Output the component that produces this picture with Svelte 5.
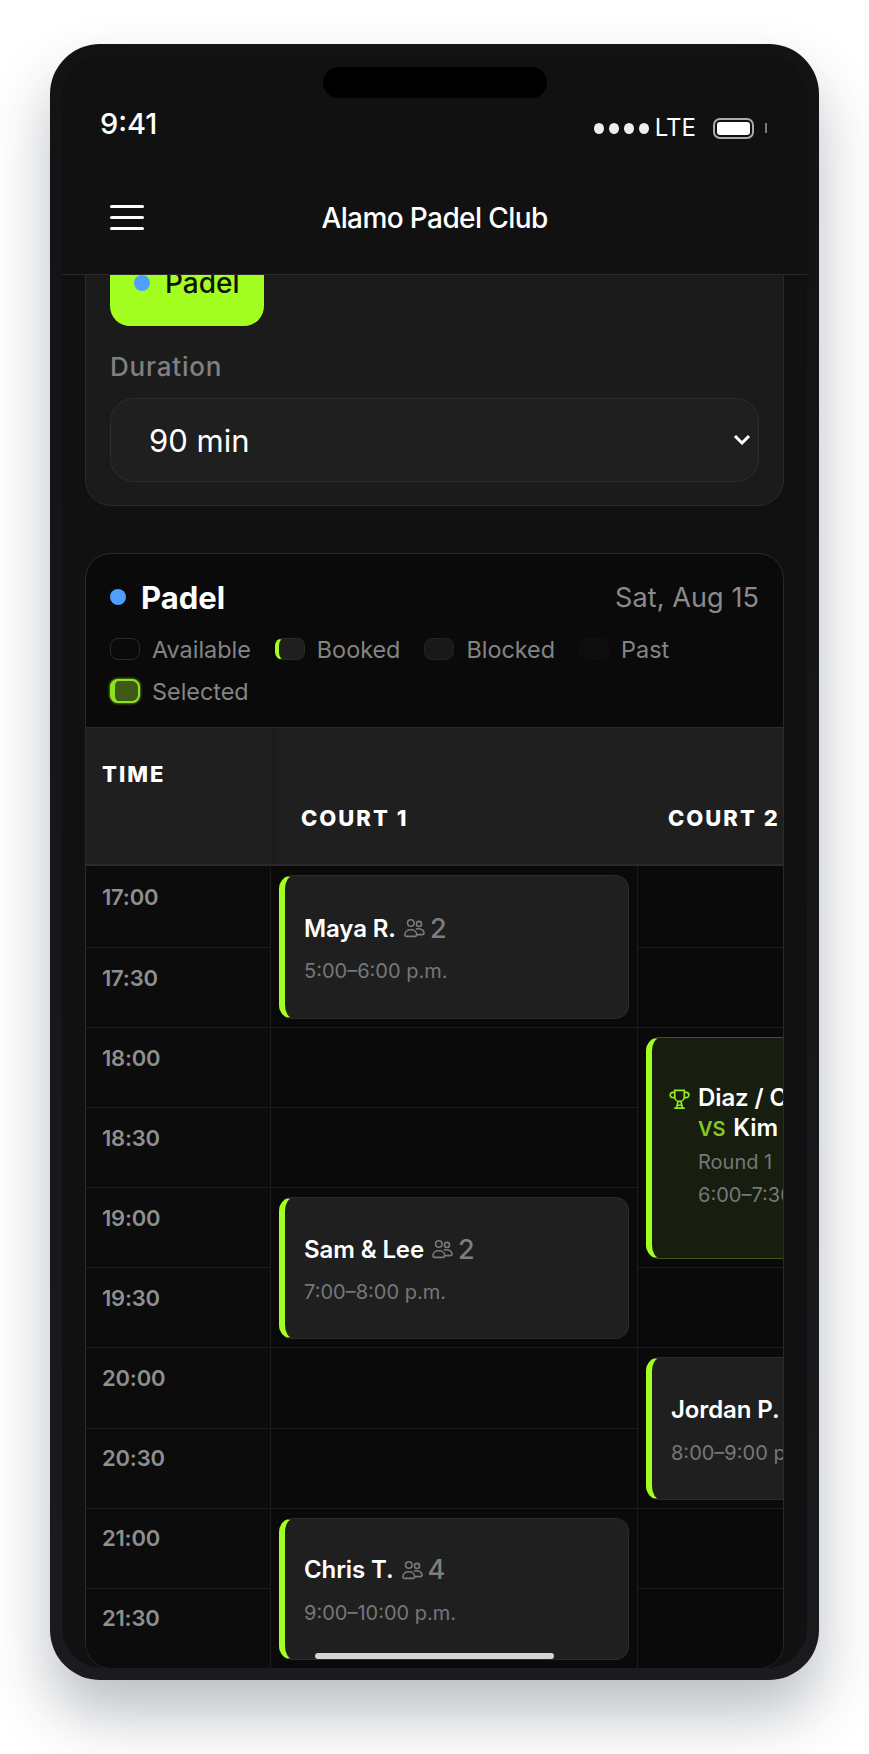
<script>
	// court schedule screen inside a phone frame
	const times = ['17:00', '17:30', '18:00', '18:30', '19:00', '19:30', '20:00', '20:30', '21:00', '21:30'];

	const legend = [
		{ label: 'Available', kind: 'available' },
		{ label: 'Booked', kind: 'booked' },
		{ label: 'Blocked', kind: 'blocked' },
		{ label: 'Past', kind: 'past' },
		{ label: 'Selected', kind: 'selected' }
	];

	const courts = [
		[
			{ row: 0, span: 2, name: 'Maya R.', players: 2, time: '5:00–6:00 p.m.' },
			{ row: 2, span: 1 },
			{ row: 3, span: 1 },
			{ row: 4, span: 2, name: 'Sam & Lee', players: 2, time: '7:00–8:00 p.m.' },
			{ row: 6, span: 1 },
			{ row: 7, span: 1 },
			{ row: 8, span: 2, name: 'Chris T.', players: 4, time: '9:00–10:00 p.m.' }
		],
		[
			{ row: 0, span: 1 },
			{ row: 1, span: 1 },
			{ row: 2, span: 3, match: true },
			{ row: 5, span: 1 },
			{ row: 6, span: 2, name: 'Jordan P.', players: 2, time: '8:00–9:00 p.m.' },
			{ row: 8, span: 1 },
			{ row: 9, span: 1 }
		]
	];
</script>

<div class="page">
	<div class="phone">
		<div class="notch"></div>
		<div class="screen">
			<div class="status">
				<span class="clock">9:41</span>
				<div class="indicators">
					<span class="dots"><i></i><i></i><i></i><i></i></span>
					<span class="lte">LTE</span>
					<span class="battery"><i></i></span>
					<span class="nub"></span>
				</div>
			</div>

			<header class="topbar">
				<button class="burger" aria-label="Menu"><i></i><i></i><i></i></button>
				<h1>Alamo Padel Club</h1>
			</header>

			<div class="scroll">
				<section class="filters">
					<button class="sport"><span class="dot"></span>Padel</button>
					<label class="field-label" for="duration">Duration</label>
					<div class="select-wrap">
						<select id="duration">
							<option>90 min</option>
						</select>
						<svg class="chevron" viewBox="0 0 18 11" width="18" height="11">
							<path d="M2 2l7 7 7-7" fill="none" stroke="#fff" stroke-width="3" />
						</svg>
					</div>
				</section>

				<section class="schedule">
					<div class="schedule-head">
						<div class="title-row">
							<h2><span class="dot"></span>Padel</h2>
							<span class="date">Sat, Aug 15</span>
						</div>
						<div class="legend">
							{#each legend as item}
								<div class="legend-item">
									<span class="swatch {item.kind}"></span>
									<span>{item.label}</span>
								</div>
							{/each}
						</div>
					</div>

					<div class="table">
						<div class="th th-time">TIME</div>
						<div class="th th-court">COURT 1</div>
						<div class="th th-court">COURT 2</div>

						{#each times as time, i}
							<div class="time-cell" style="grid-row: {i + 2}">{time}</div>
						{/each}

						{#each courts as court, c}
							{#each court as cell}
								<div class="cell" style="grid-column: {c + 2}; grid-row: {cell.row + 2} / span {cell.span}">
									{#if cell.match}
										<div class="booking match">
											<svg class="trophy" viewBox="0 0 24 24" width="23" height="23">
												<path
													d="M7 2.500h10v6.500a5 5 0 0 1-10 0zM7 4.500H5a2.600 2.600 0 0 0 0 5.500h2.400M17 4.500h2a2.600 2.600 0 0 1 0 5.500h-2.400M10.500 14l-1.500 6.500M13.500 14l1.500 6.500M6.500 21h11M9.500 18h5"
													fill="none"
													stroke="#94ea1e"
													stroke-width="1.800"
												/>
											</svg>
											<div class="match-text">
												<div class="name">Diaz / Cruz</div>
												<div class="name"><span class="vs">VS</span> Kim / Lopez</div>
												<div class="when round">Round 1</div>
												<div class="when">6:00–7:30 p.m.</div>
											</div>
										</div>
									{:else if cell.name}
										<div class="booking">
											<div class="name-row">
												<span class="name">{cell.name}</span>
												<svg class="people" viewBox="0 0 24 22" width="22" height="20">
													<g fill="none" stroke="#7b7b7b" stroke-width="1.700">
														<circle cx="8.500" cy="5.500" r="3.600" />
														<circle cx="17.500" cy="6.500" r="2.800" />
														<path d="M2 18.500c0-3.500 3-5.500 6.500-5.500s6.500 2 6.500 5.500c0 1-.7 1.700-1.600 1.700H3.600c-.9 0-1.600-.7-1.600-1.700z" />
														<path d="M14 12.200c4.300-1.200 9 .6 9 4.600 0 .9-.7 1.500-1.500 1.500H15" />
													</g>
												</svg>
												<span class="count">{cell.players}</span>
											</div>
											<div class="when">{cell.time}</div>
										</div>
									{/if}
								</div>
							{/each}
						{/each}
					</div>
				</section>
			</div>

			<div class="home-bar"></div>
		</div>
	</div>
</div>

<style>
	:global(body) {
		margin: 0;
		background: #fff;
		font-family: Inter, 'Liberation Sans', sans-serif;
	}

	.page {
		box-sizing: border-box;
		height: 1754px;
		padding: 44px 50px 0;
		overflow: hidden;
	}

	.phone {
		position: relative;
		box-sizing: border-box;
		width: 769px;
		height: 1636px;
		padding: 12px;
		border-radius: 50px;
		background: linear-gradient(#131315, #1a1b1e);
		box-shadow: 0 34px 60px rgba(30, 40, 55, 0.3);
	}

	.notch {
		position: absolute;
		top: 23px;
		left: 273px;
		width: 224px;
		height: 31px;
		border-radius: 16px;
		background: #000;
		z-index: 3;
	}

	.screen {
		position: relative;
		display: flex;
		flex-direction: column;
		height: 100%;
		overflow: hidden;
		border-radius: 40px;
		background: #111;
		color: #fff;
	}

	.status {
		display: flex;
		justify-content: space-between;
		align-items: center;
		height: 104px;
		box-sizing: border-box;
		padding: 40px 40px 0 38px;
	}

	.clock {
		margin-bottom: 8px;
		font-size: 29px;
		font-weight: 500;
		line-height: 36px;
	}

	.indicators {
		display: flex;
		align-items: center;
	}

	.dots {
		display: flex;
		gap: 5px;
		margin-right: 6px;
	}

	.dots i {
		width: 10px;
		height: 11px;
		border-radius: 50%;
		background: #eee;
	}

	.lte {
		font-size: 24px;
		line-height: 28px;
		margin-right: 17px;
	}

	.battery {
		box-sizing: border-box;
		width: 41px;
		height: 21px;
		padding: 2px;
		border: 2px solid #aaa;
		border-radius: 7px;
	}

	.battery i {
		display: block;
		height: 100%;
		border-radius: 3px;
		background: #fff;
	}

	.nub {
		width: 2px;
		height: 10px;
		margin-left: 11px;
		background: #777;
	}

	.topbar {
		position: relative;
		z-index: 2;
		display: grid;
		grid-template-columns: 1fr auto 1fr;
		align-items: center;
		height: 115px;
		box-sizing: border-box;
		padding: 0 48px;
		border-bottom: 1px solid #2a2a2a;
		background: #111;
	}

	.burger {
		display: flex;
		flex-direction: column;
		gap: 8px;
		width: 34px;
		padding: 0;
		border: 0;
		background: none;
	}

	.burger i {
		height: 3px;
		border-radius: 2px;
		background: #fff;
	}

	h1 {
		margin: 2px 0 0;
		font-size: 28px;
		font-weight: 500;
		letter-spacing: -0.6px;
	}

	.scroll {
		flex: 1;
		min-height: 0;
		overflow: hidden;
		padding: 0 23px;
	}

	.filters {
		box-sizing: border-box;
		margin-top: -60px;
		padding: 24px 24px;
		height: 291px;
		border: 1px solid #2a2a2a;
		border-radius: 26px;
		background: #1b1b1b;
	}

	.dot {
		display: inline-block;
		flex: none;
		width: 16px;
		height: 16px;
		border-radius: 50%;
		background: #4e9fff;
	}

	.sport {
		display: flex;
		align-items: center;
		gap: 15px;
		box-sizing: border-box;
		width: 154px;
		height: 86px;
		padding: 0 0 0 24px;
		border: 0;
		border-radius: 20px;
		background: #a3ff1f;
		color: #111;
		font: 500 28px Inter, sans-serif;
	}

	.field-label {
		display: block;
		margin: 26px 0 16px;
		font-size: 26px;
		font-weight: 500;
		letter-spacing: 0.8px;
		line-height: 30px;
		color: #808080;
	}

	.select-wrap {
		position: relative;
	}

	select {
		display: block;
		box-sizing: border-box;
		width: 100%;
		height: 84px;
		padding: 0 38px;
		border: 1px solid #2d2d2d;
		border-radius: 24px;
		background: #1f1f1f;
		color: #fff;
		font: 400 31px Inter, sans-serif;
		appearance: none;
	}

	.chevron {
		position: absolute;
		top: 36px;
		right: 8px;
	}

	.schedule {
		box-sizing: border-box;
		height: 1116px;
		margin-top: 47px;
		overflow: hidden;
		border: 1px solid #2a2a2a;
		border-radius: 26px;
		background: #0a0a0a;
	}

	.schedule-head {
		box-sizing: border-box;
		height: 173px;
		padding: 23px 24px 0;
	}

	.title-row {
		display: flex;
		justify-content: space-between;
		align-items: center;
		height: 40px;
	}

	h2 {
		display: flex;
		align-items: center;
		gap: 15px;
		margin: 0;
		font-size: 31px;
		font-weight: 700;
	}

	.date {
		font-size: 27px;
		letter-spacing: 0.1px;
		color: #8a8a8a;
	}

	.legend {
		display: flex;
		flex-wrap: wrap;
		gap: 14px 24px;
		margin-top: 18px;
		font-size: 23.4px;
		color: #848484;
	}

	.legend-item {
		display: flex;
		align-items: center;
		gap: 12px;
		height: 28px;
	}

	.swatch {
		box-sizing: border-box;
		width: 30px;
		height: 22px;
		border: 1px solid #2a2a2a;
		border-radius: 8px;
	}

	.swatch.booked {
		border-left: 4px solid #a3ff1f;
		background: #1f1f1f;
	}

	.swatch.blocked {
		border-color: #222;
		background: #191919;
	}

	.swatch.past {
		border-color: #111;
		background: #0d0d0d;
	}

	.swatch.selected {
		height: 24px;
		border: 2px solid #8fe01f;
		border-left-width: 5px;
		background: #3f5a14;
		box-shadow: 0 0 3px #8fe01f;
	}

	.table {
		display: grid;
		grid-template-columns: 185px 367px 367px;
		grid-template-rows: 139px 82px repeat(9, 80.1px);
		overflow: hidden;
	}

	.th {
		box-sizing: border-box;
		border-top: 1px solid #2a2a2a;
		border-bottom: 2px solid #2a2a2a;
		background: #1f1f1f;
		font-size: 22px;
		font-weight: 800;
		letter-spacing: 2px;
		line-height: 26px;
	}

	.th-time {
		position: relative;
		z-index: 1;
		padding: 33px 0 0 16px;
		box-shadow: 4px 0 6px rgba(0, 0, 0, 0.1);
	}

	.th-court {
		padding: 77px 0 0 30px;
	}

	.time-cell {
		display: flex;
		align-items: center;
		box-sizing: border-box;
		grid-column: 1;
		padding: 0 0 20px 16px;
		border-right: 1px solid #1c1c1c;
		border-bottom: 1px solid #1c1c1c;
		background: #0c0c0c;
		font-size: 22px;
		font-weight: 600;
		letter-spacing: -0.2px;
		line-height: 26px;
		color: #8f8f8f;
	}

	.cell {
		box-sizing: border-box;
		padding: 9px 8px 8px 8px;
		border-right: 1px solid #1c1c1c;
		border-bottom: 1px solid #1c1c1c;
		background: #0a0a0a;
	}

	.booking {
		display: flex;
		flex-direction: column;
		justify-content: center;
		box-sizing: border-box;
		height: 100%;
		padding: 3px 0 0 19px;
		border: 1px solid #2d2d2d;
		border-left: 6px solid #a3ff1f;
		border-radius: 14px;
		background: #1f1f1f;
	}

	.booking.match {
		flex-direction: row;
		align-items: center;
		justify-content: flex-start;
		gap: 7px;
		padding: 0 0 6px 16px;
		border-color: #3c5a1c;
		border-left-color: #a3ff1f;
		background: #171d0f;
	}

	.trophy {
		align-self: flex-start;
		margin-top: 50px;
		flex: none;
	}

	.match-text {
		white-space: nowrap;
	}

	.match-text .name {
		line-height: 30px;
	}

	.name-row {
		display: flex;
		align-items: center;
		gap: 7px;
		height: 30px;
		white-space: nowrap;
	}

	.name {
		font-size: 24px;
		font-weight: 600;
		letter-spacing: -0.1px;
	}

	.vs {
		margin-right: 2px;
		font-size: 20px;
		font-weight: 600;
		color: #82c81f;
	}

	.count {
		margin-left: -2px;
		font-size: 27px;
		font-weight: 500;
		color: #7e7e7e;
	}

	.when {
		margin-top: 15px;
		font-size: 20px;
		line-height: 26px;
		color: #777;
		white-space: nowrap;
	}

	.round {
		margin-top: 5px;
	}

	.match-text .when + .when {
		margin-top: 7px;
	}

	.home-bar {
		position: absolute;
		bottom: 9px;
		left: 253px;
		width: 239px;
		height: 6px;
		border-radius: 3px;
		background: #d5d5d5;
		z-index: 2;
	}
</style>
